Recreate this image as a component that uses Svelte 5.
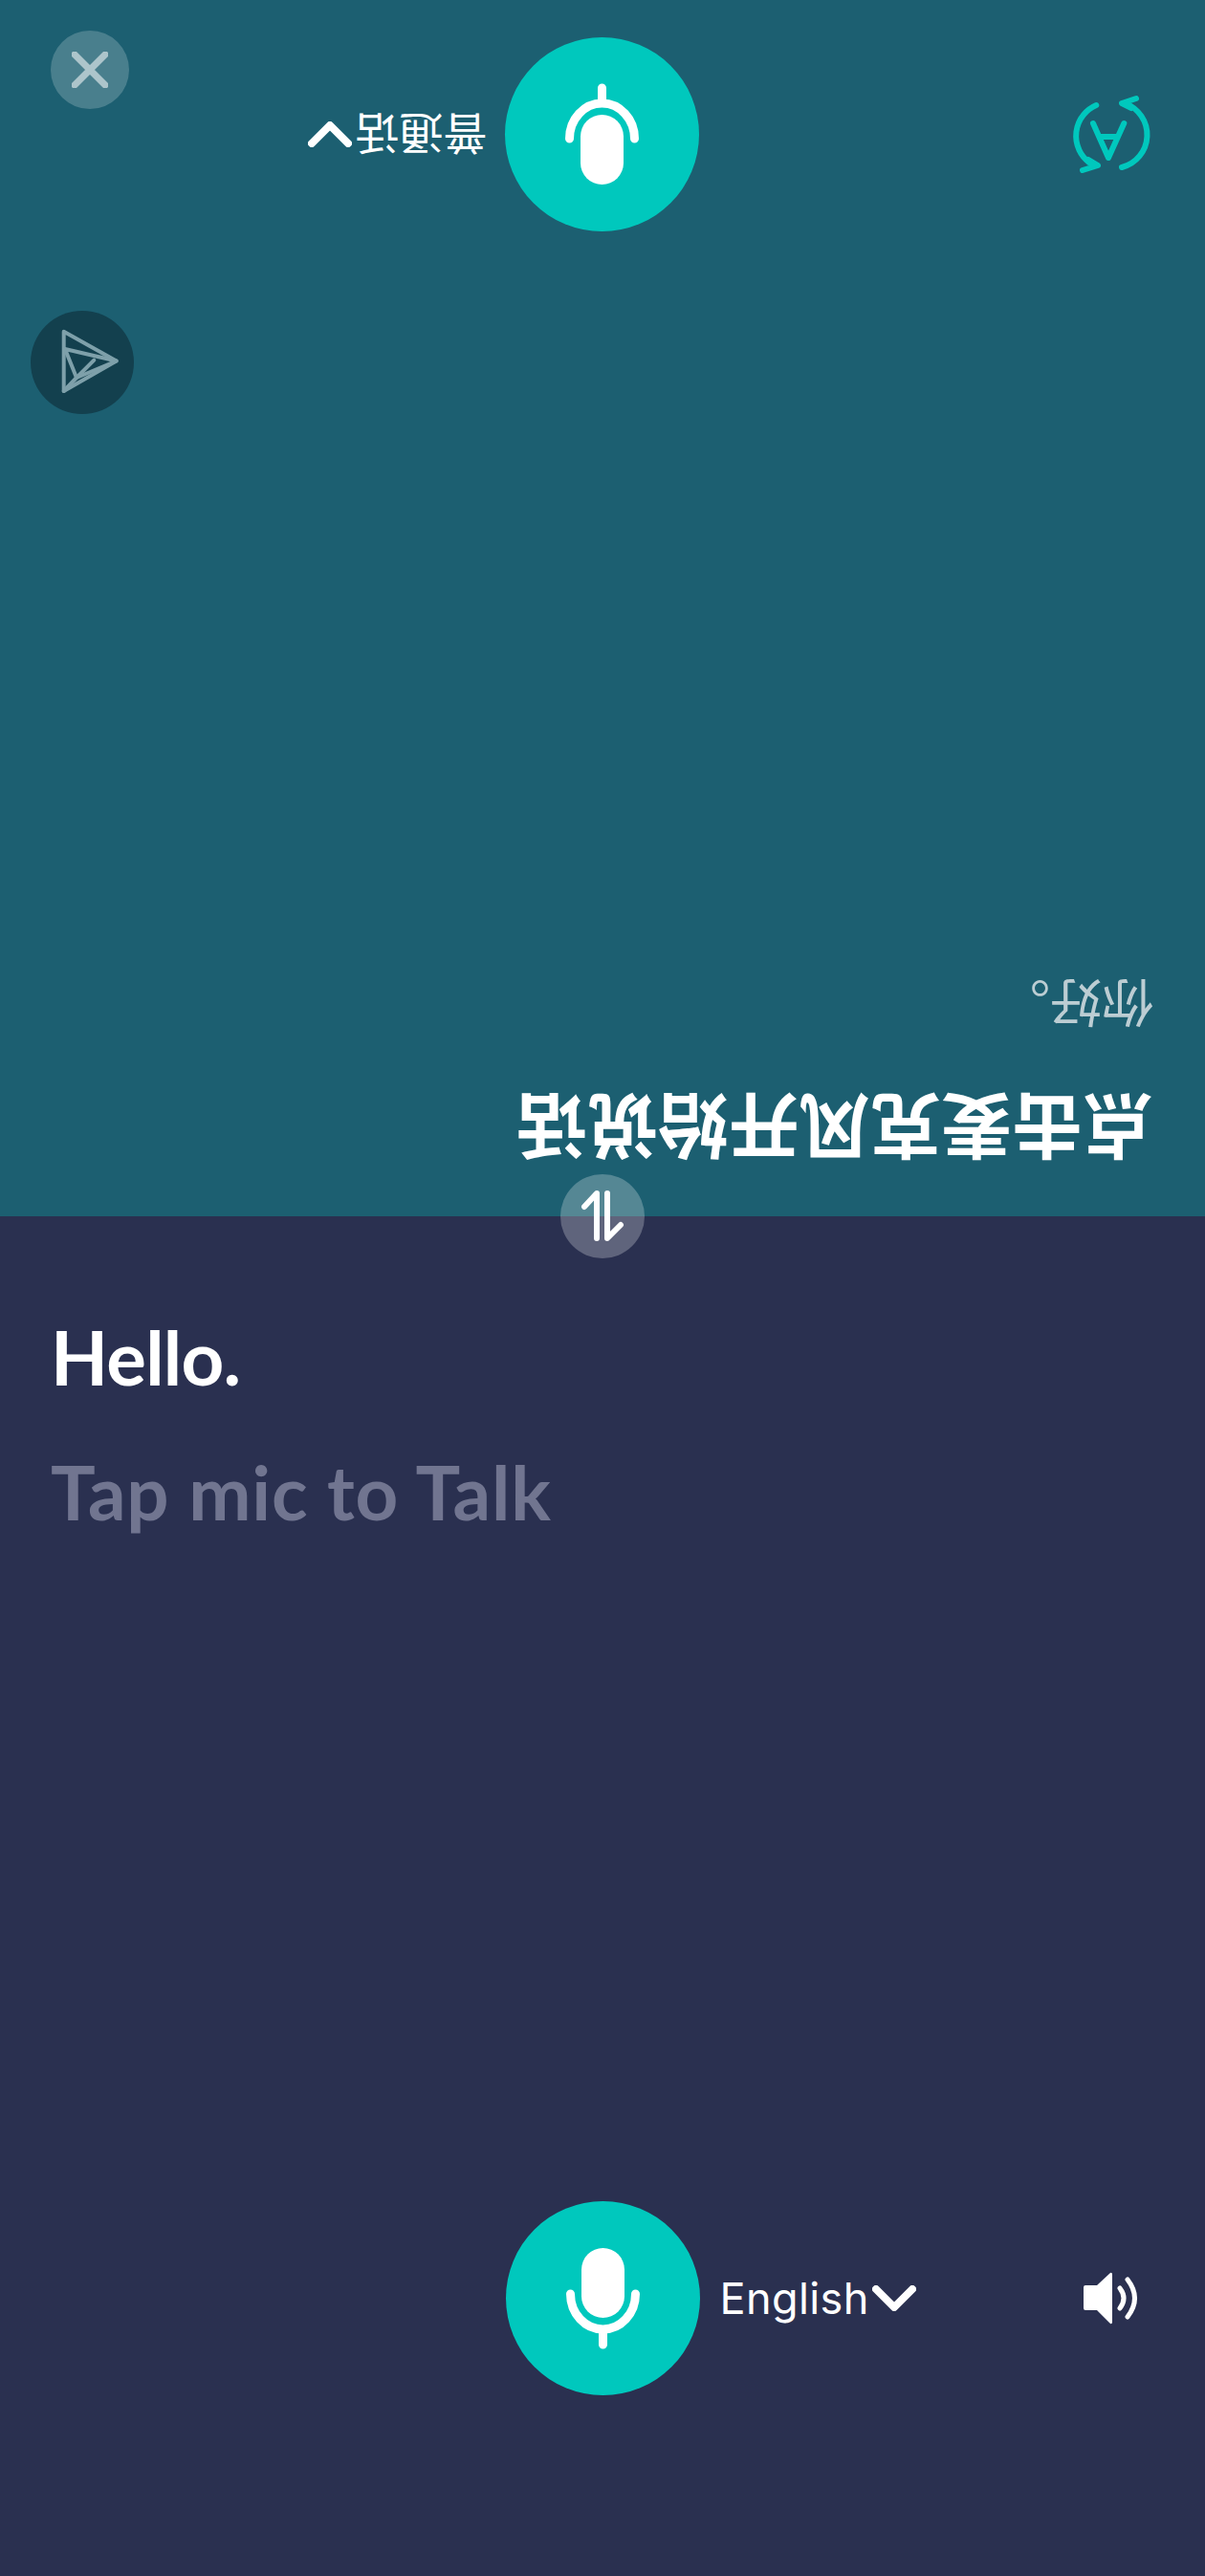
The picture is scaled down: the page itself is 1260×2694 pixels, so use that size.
<script>
	let speakLabel = 'Tap mic to Talk';
</script>

{#snippet micButton()}
	<button class="mic" aria-label="mic">
		<svg width="203" height="203" viewBox="0 0 203 203">
			<rect x="79" y="49" width="45" height="73" rx="22.5" fill="#fff" />
			<path d="M67.5 97 A34 37 0 0 0 135.5 97 M101.5 134 V150" fill="none" stroke="#fff" stroke-width="9" stroke-linecap="round" />
		</svg>
	</button>
{/snippet}

{#snippet chevron()}
	<svg class="chevron" width="46" height="27" viewBox="0 0 46 27">
		<path d="M4 4 L23 23 L42 4" fill="none" stroke="#fff" stroke-width="8" stroke-linecap="round" stroke-linejoin="round" />
	</svg>
{/snippet}

<div class="shell">
	<section class="pane top">
		<div class="texts">
			<p class="prompt">点击麦克风开始说话</p>
			<p class="translated">你好。</p>
		</div>
		<div class="controls">
			<div class="side left">
				<svg width="95" height="95" viewBox="54 23 95 95" fill="none" stroke="#00c8bd" stroke-width="6" stroke-linecap="round" stroke-linejoin="round">
					<path d="M88 36 A35 35 0 0 0 85 103 M73 108 L88 103 L78 98" />
					<path d="M114.7 101 A35 35 0 0 0 122 41 M129 33 L113 38 L123 44" />
					<path d="M85.7 82 L102 46 L118 82 M92.7 68 H110.3" />
				</svg>
			</div>
			{@render micButton()}
			<div class="side right">
				<span class="lang zh">普通话</span>
				{@render chevron()}
			</div>
		</div>
	</section>

	<section class="pane bottom">
		<div class="texts">
			<p class="source">Hello.</p>
			<p class="hint">{speakLabel}</p>
		</div>
		<div class="controls">
			<div class="side left"></div>
			{@render micButton()}
			<div class="side right">
				<span class="lang">English</span>
				{@render chevron()}
				<svg class="speaker" width="59" height="55" viewBox="0 0 59 55" fill="none">
					<path d="M2 14 H14 L28 1 Q30 0 30 3 V52 Q30 55 28 54 L14 40 H2 Q0 40 0 38 V16 Q0 14 2 14 Z" fill="#fff" />
					<path d="M38 17 Q46 27.5 38 38 M46 8 Q61 27.5 46 47" stroke="#fff" stroke-width="5" stroke-linecap="round" />
				</svg>
			</div>
		</div>
	</section>

	<button class="close" aria-label="close">
		<svg width="38" height="38" viewBox="0 0 38 38">
			<path d="M3 3 L35 35 M35 3 L3 35" stroke="#fff" stroke-opacity="0.55" stroke-width="7" stroke-linecap="round" />
		</svg>
	</button>

	<button class="send" aria-label="send">
		<svg width="108" height="108" viewBox="0 0 108 108" fill="none" stroke="#7ea0aa" stroke-width="4" stroke-linejoin="round" stroke-linecap="round">
			<path d="M34.7 21.7 L89.7 52.5 L34.7 84 Z" />
			<path d="M36 40 L89.7 52.5 L48 70 Z" />
			<path d="M66.3 51.7 L48 70 L34.7 84" />
		</svg>
	</button>

	<button class="swap" aria-label="swap languages">
		<svg width="88" height="88" viewBox="0 0 88 88" fill="none" stroke="#fff" stroke-width="6" stroke-linecap="round" stroke-linejoin="round">
			<path d="M38 67 V20 L25 34" />
			<path d="M49 20 V67 L63 53" />
		</svg>
	</button>
</div>

<style>
	:global(body) {
		margin: 0;
		background: #2a3050;
	}

	.shell {
		position: relative;
		width: 1260px;
		height: 2694px;
		overflow: hidden;
		font-family: Lato, "Noto Sans CJK SC", sans-serif;
		color: #fff;
	}

	.pane {
		box-sizing: border-box;
		display: flex;
		flex-direction: column;
	}

	.pane.top {
		height: 1272px;
		background: #1c5f71;
		transform: rotate(180deg);
		padding-bottom: 39px;
	}

	.pane.bottom {
		height: 1422px;
		background: #2a3050;
		padding-bottom: 189px;
	}

	.texts {
		flex: 1;
		padding: 0 55px;
	}

	p {
		margin: 0;
		white-space: nowrap;
	}

	.top .texts {
		padding-top: 42px;
		padding-left: 54px;
	}

	.prompt {
		font-family: "Noto Sans CJK SC", sans-serif;
		font-size: 74px;
		font-weight: 700;
		line-height: 96px;
	}

	.translated {
		font-family: "Noto Sans CJK SC", sans-serif;
		font-size: 54px;
		line-height: 66px;
		margin-top: 50px;
		color: #bccdd3;
	}

	.bottom .texts {
		padding-top: 100px;
	}

	.source {
		font-size: 78px;
		font-weight: 700;
		line-height: 94px;
		letter-spacing: -0.7px;
		margin-left: -2px;
	}

	.hint {
		font-size: 78px;
		font-weight: 700;
		line-height: 94px;
		letter-spacing: 0.8px;
		margin-top: 47px;
		margin-left: -2px;
		color: #717590;
	}

	.controls {
		display: grid;
		grid-template-columns: 1fr 203px 1fr;
		align-items: center;
	}

	.side {
		display: flex;
		align-items: center;
	}

	.side.left {
		padding-left: 53px;
	}

	.side.right {
		padding-left: 21px;
		padding-right: 68px;
	}

	.top .side.right {
		padding-left: 19px;
	}

	.lang {
		font-family: Inter, "Noto Sans CJK SC", sans-serif;
		font-size: 45px;
		line-height: 56px;
		letter-spacing: 0.4px;
	}

	.lang.zh {
		font-size: 46px;
		letter-spacing: 0;
	}

	.chevron {
		margin-left: 3px;
	}

	.speaker {
		margin-left: auto;
	}

	button {
		border: 0;
		padding: 0;
		margin: 0;
		display: flex;
		align-items: center;
		justify-content: center;
		border-radius: 50%;
	}

	.mic {
		width: 203px;
		height: 203px;
		background: #00c8bd;
	}

	.close {
		position: absolute;
		left: 53px;
		top: 32px;
		width: 82px;
		height: 82px;
		background: rgba(255, 255, 255, 0.2);
	}

	.send {
		position: absolute;
		left: 32px;
		top: 325px;
		width: 108px;
		height: 108px;
		background: #13404e;
	}

	.swap {
		position: absolute;
		left: 586px;
		top: 1228px;
		width: 88px;
		height: 88px;
		background: rgba(255, 255, 255, 0.25);
	}
</style>
